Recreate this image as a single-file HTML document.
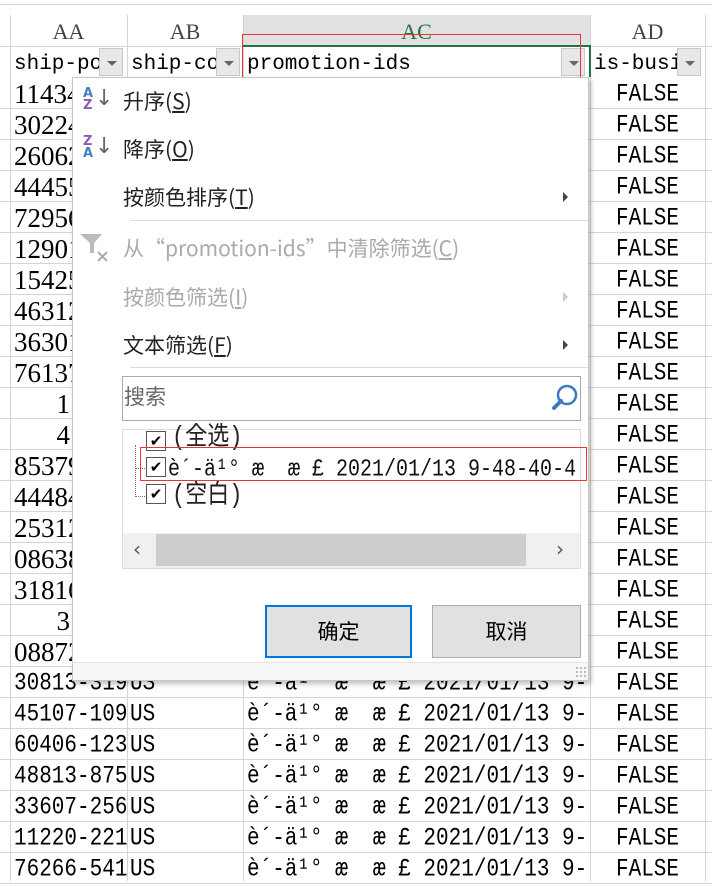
<!DOCTYPE html>
<html><head><meta charset="utf-8">
<style>
*{margin:0;padding:0;box-sizing:border-box}
body{width:712px;height:881px;overflow:hidden;background:#fff;position:relative;font-family:"Liberation Mono","Noto Sans CJK SC",monospace}
.a{position:absolute}
.vl{position:absolute;top:15px;bottom:0;width:1px;background:#d4d4d4}
.hl{position:absolute;left:0;right:0;height:1px;background:#d4d4d4}
.c{position:absolute;font-family:"Liberation Serif","Noto Serif CJK SC",serif;font-size:23px;color:#000;white-space:nowrap;overflow:hidden;line-height:31px}
.m{font-family:"Liberation Mono","Noto Sans CJK SC",monospace;font-size:21px}
.dd{position:absolute;width:24px;height:28px;background:#e8e8e8;border:1px solid #c8c8c8}
.dd:after{content:"";position:absolute;left:7px;top:12px;border-left:5px solid transparent;border-right:5px solid transparent;border-top:5px solid #666}
.mi{position:absolute;left:123px;font-family:"Noto Sans CJK SC",sans-serif;font-size:21px;color:#222;line-height:30px}
.dis{color:#aaa}
.arr{position:absolute;left:563px;width:0;height:0;border-top:5px solid transparent;border-bottom:5px solid transparent;border-left:5px solid #444}
.cb{position:absolute;left:146px;width:20px;height:20px;border:1px solid #555;background:#fff;font-size:15px;line-height:18px;text-align:center;font-family:"DejaVu Sans",sans-serif;font-weight:bold}
.t{display:inline-block;transform:scaleY(1.2);transform-origin:0 60%}
</style></head><body>
<div class="a" style="left:0;top:4px;width:712px;height:1px;background:#d4d4d4"></div>
<div class="a" style="left:243px;top:15px;width:347px;height:32px;background:#e1e1e1"></div>
<div class="hl" style="top:46px"></div>
<div class="c" style="left:10px;top:16px;width:117px;text-align:center;color:#444;font-size:22px">AA</div>
<div class="c" style="left:127px;top:16px;width:116px;text-align:center;color:#444;font-size:22px">AB</div>
<div class="c" style="left:243px;top:16px;width:347px;text-align:center;color:#217346;font-size:22px">AC</div>
<div class="c" style="left:590px;top:16px;width:115px;text-align:center;color:#444;font-size:22px">AD</div>
<div class="vl" style="left:10px"></div><div class="vl" style="left:127px"></div><div class="vl" style="left:243px"></div><div class="vl" style="left:590px"></div><div class="vl" style="left:705px"></div>
<div class="c m" style="left:14px;top:49px;width:86px">ship-po</div>
<div class="dd" style="left:99px;top:48px"></div>
<div class="c m" style="left:131px;top:49px;width:86px">ship-co</div>
<div class="dd" style="left:216px;top:48px"></div>
<div class="c m" style="left:247px;top:49px;width:300px">promotion-ids</div>
<div class="dd" style="left:561px;top:48px"></div>
<div class="c m" style="left:594px;top:49px;width:84px">is-busi</div>
<div class="dd" style="left:677px;top:48px"></div>
<div class="a" style="left:243px;top:45px;width:348px;height:2px;background:#217346"></div>
<div class="a" style="left:589px;top:45px;width:2px;height:32px;background:#217346"></div>
<div class="a" style="left:242px;top:34px;width:339px;height:54px;border:1px solid #e33"></div>

<div id="data"></div>

<!-- menu -->
<div class="a" style="left:72px;top:77px;width:517px;height:604px;background:#fff;border:1px solid #c6c6c6;box-shadow:2px 3px 5px rgba(0,0,0,.25)"></div>
<div class="a" style="left:83px;top:88px;font:bold 13px 'DejaVu Sans',sans-serif;line-height:12px"><span style="color:#4a7ebb">A</span><br><span style="color:#8a5bb5">Z</span></div>
<div class="a" style="left:95px;top:86px;font-size:22px;color:#666;font-family:'DejaVu Sans'">↓</div>
<div class="a" style="left:83px;top:136px;font:bold 13px 'DejaVu Sans',sans-serif;line-height:12px"><span style="color:#8a5bb5">Z</span><br><span style="color:#4a7ebb">A</span></div>
<div class="a" style="left:95px;top:134px;font-size:22px;color:#666;font-family:'DejaVu Sans'">↓</div>
<div class="mi" style="top:86px">升序(<u>S</u>)</div>
<div class="mi" style="top:134px">降序(<u>O</u>)</div>
<div class="mi" style="top:182px">按颜色排序(<u>T</u>)</div>
<div class="arr" style="top:192px"></div>
<div class="a" style="left:130px;top:220px;width:458px;height:1px;background:#ddd"></div>
<svg class="a" style="left:80px;top:232px" width="32" height="32"><path d="M0 2h22l-8 9v10h-4V11z" fill="#bbb"/><path d="M18 20l9 9M27 20l-9 9" stroke="#aaa" stroke-width="2"/></svg>
<div class="mi dis" style="top:233px">从“promotion-ids”中清除筛选(<u>C</u>)</div>
<div class="mi dis" style="top:282px">按颜色筛选(<u>I</u>)</div>
<div class="arr" style="top:292px;border-left-color:#ccc"></div>
<div class="mi" style="top:330px">文本筛选(<u>F</u>)</div>
<div class="arr" style="top:340px"></div>
<div class="a" style="left:130px;top:367px;width:458px;height:1px;background:#ddd"></div>
<div class="a" style="left:122px;top:376px;width:459px;height:45px;border:1px solid #aaa"></div>
<div class="mi" style="top:381px;left:124px;color:#666">搜索</div>
<svg class="a" style="left:550px;top:383px" width="30" height="30"><circle cx="17" cy="12" r="9" fill="none" stroke="#3a7bc4" stroke-width="2.5"/><path d="M11 18l-7 7" stroke="#3a7bc4" stroke-width="4" stroke-linecap="round"/></svg>
<div class="a" style="left:122px;top:429px;width:459px;height:140px;border:1px solid #ddd"></div>
<div class="a" style="left:135px;top:445px;width:1px;height:52px;border-left:1px dotted #777"></div>
<div class="a" style="left:135px;top:496px;width:12px;border-top:1px dotted #777"></div>
<div class="a" style="left:135px;top:468px;width:12px;border-top:1px dotted #777"></div>
<div class="cb" style="top:431px">✔</div>
<div class="cb" style="top:457px">✔</div>
<div class="cb" style="top:484px">✔</div>
<div class="c m" style="left:172px;top:423px;font-size:22px;color:#222"><span class="t">(全选)</span></div>
<div class="c m" style="left:168px;top:455px;width:415px;font-size:20px;color:#111"><span class="t">è´-ä¹° æ&nbsp;&nbsp;æ £ 2021/01/13 9-48-40-4</span></div>
<div class="c m" style="left:172px;top:481px;font-size:22px;color:#222"><span class="t">(空白)</span></div>
<div class="a" style="left:140px;top:447px;width:447px;height:34px;border:1px solid #e33"></div>
<div class="a" style="left:123px;top:533px;width:457px;height:35px;background:#f0f0f0"></div>
<div class="a" style="left:156px;top:534px;width:370px;height:32px;background:#cdcdcd"></div>
<div class="a" style="left:133px;top:537px;font:20px 'DejaVu Sans';color:#555">‹</div>
<div class="a" style="left:556px;top:537px;font:20px 'DejaVu Sans';color:#555">›</div>
<div class="a" style="left:265px;top:605px;width:147px;height:53px;background:#e1e1e1;border:2px solid #0078d7;font-family:'Noto Sans CJK SC',sans-serif;font-size:21px;text-align:center;line-height:49px">确定</div>
<div class="a" style="left:432px;top:605px;width:149px;height:53px;background:#e1e1e1;border:1px solid #adadad;font-family:'Noto Sans CJK SC',sans-serif;font-size:21px;text-align:center;line-height:51px">取消</div>
<div class="a" style="left:72px;top:662px;width:517px;height:1px;background:#e3e3e3"></div>
<div class="a" style="left:73px;top:663px;width:515px;height:17px;background:#f7f7f7"></div>
<div class="a" style="left:575px;top:666px;width:12px;height:12px;background:radial-gradient(#bbb 40%,transparent 45%) 0 0/4px 4px"></div>

<script>
var rows=["11434","30224","26062","44455","72956","12901","15425","46312","36301","76137","1","4","85379","44484","25312","08638","31816","3","08872","30813-319","45107-109","60406-123","48813-875","33607-256","11220-221","76266-541"];
var h="";
for(var i=0;i<26;i++){var t=77+31*i;
h+='<div class="hl" style="top:'+(t+31)+'px"></div>';
var v=rows[i];
if(v.length>5){
h+='<div class="c m" style="left:14px;top:'+(t+3)+'px;width:113px"><span class="t">'+v+'</span></div>';
}else if(v.length==1){
h+='<div class="c" style="left:14px;top:'+(t+2)+'px;width:56px;font-size:27px;text-align:right">'+v+'</div>';
}else{
h+='<div class="c" style="left:14px;top:'+(t+2)+'px;width:113px;font-size:27px">'+v+'</div>';}
if(i>=19){h+='<div class="c m" style="left:130px;top:'+(t+3)+'px"><span class="t">US</span></div>';
h+='<div class="c m" style="left:247px;top:'+(t+3)+'px;width:342px"><span class="t">è´-ä¹° æ&nbsp;&nbsp;æ £ 2021/01/13 9-</span></div>';}
h+='<div class="c m" style="left:590px;top:'+(t+3)+'px;width:115px;text-align:center"><span class="t" style="transform-origin:50% 60%">FALSE</span></div>';}
document.getElementById("data").innerHTML=h;
</script>
</body></html>
